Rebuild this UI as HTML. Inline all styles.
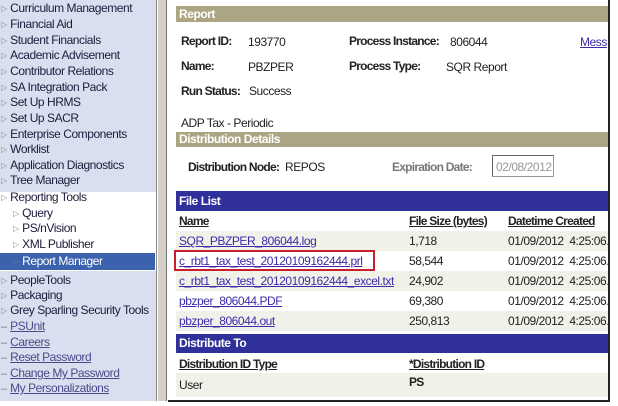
<!DOCTYPE html>
<html><head><style>
*{margin:0;padding:0;box-sizing:border-box}
body{width:618px;height:406px;overflow:hidden;background:#fff;font-family:"Liberation Sans",Arial,sans-serif;font-size:12px;position:relative}
#nav{position:absolute;left:0;top:0;width:157px;height:401px;background:#d9dfee;border-right:1px solid #8a8a8a}
.it{position:absolute;left:1px;height:15px;line-height:15px;color:#1c1c3c;white-space:nowrap;font-size:12px;letter-spacing:-0.45px}
.it:before{content:"▷";font-size:8px;color:#888;margin-right:3px;vertical-align:1px;letter-spacing:0}
.sub{left:13px}
.dash:before{content:"–";font-size:11px;color:#777;margin-right:3px;vertical-align:0}
.lnk{color:#4a4a8a;text-decoration:underline}
#white{position:absolute;left:0;top:192px;width:156px;height:79px;background:#fff}
#sel{position:absolute;left:0;top:253px;width:155px;height:17px;background:#3d62ad}
#strip{position:absolute;left:158px;top:0;width:9px;height:401px;background:#d4d0c8;border-right:1px solid #777}
#main{position:absolute;left:168px;top:0;width:442px;height:402px;background:#fff;border-right:2px solid #222;border-bottom:2px solid #222;letter-spacing:-0.45px}
.bar{position:absolute;left:8px;width:432px;color:#fff;font-weight:bold;font-size:12px;padding-left:3px}
.tan{background:#aca583}
.blue{background:#30309a}
.t{position:absolute;white-space:nowrap;color:#222}
.b{font-weight:bold;letter-spacing:-0.75px}
.a{color:#3a2ca8;text-decoration:underline}
.h{text-decoration:underline;font-weight:bold;color:#222;letter-spacing:-0.75px}
.row{position:absolute;left:8px;width:432px;height:20px;background:#f1f1ea}
</style></head><body>
<div id="nav">
<div id="white"></div><div id="sel"></div>
<div class="it" style="top:1px">Curriculum Management</div>
<div class="it" style="top:17px">Financial Aid</div>
<div class="it" style="top:33px">Student Financials</div>
<div class="it" style="top:48px">Academic Advisement</div>
<div class="it" style="top:64px">Contributor Relations</div>
<div class="it" style="top:80px">SA Integration Pack</div>
<div class="it" style="top:95px">Set Up HRMS</div>
<div class="it" style="top:111px">Set Up SACR</div>
<div class="it" style="top:127px">Enterprise Components</div>
<div class="it" style="top:142px">Worklist</div>
<div class="it" style="top:158px">Application Diagnostics</div>
<div class="it" style="top:173px">Tree Manager</div>
<div class="it" style="top:190px;">Reporting Tools</div>
<div class="it sub" style="top:206px">Query</div>
<div class="it sub" style="top:221px">PS/nVision</div>
<div class="it sub" style="top:237px">XML Publisher</div>
<div class="it sub dash" style="top:254px;color:#fff">Report Manager</div>
<div class="it" style="top:273px">PeopleTools</div>
<div class="it" style="top:288px">Packaging</div>
<div class="it" style="top:303px">Grey Sparling Security Tools</div>
<div class="it dash" style="top:319px"><span class="lnk">PSUnit</span></div>
<div class="it dash" style="top:335px"><span class="lnk">Careers</span></div>
<div class="it dash" style="top:350px"><span class="lnk">Reset Password</span></div>
<div class="it dash" style="top:366px"><span class="lnk">Change My Password</span></div>
<div class="it dash" style="top:381px"><span class="lnk">My Personalizations</span></div>
</div>
<div id="strip"></div>
<div id="main">
<div class="bar tan" style="top:6px;height:16px;line-height:16px">Report</div>
<div class="t b" style="left:13px;top:34px">Report ID:</div><div class="t" style="left:80px;top:35px">193770</div>
<div class="t b" style="left:181px;top:34px">Process Instance:</div><div class="t" style="left:282px;top:35px">806044</div>
<div class="t a" style="left:412px;top:35px">Mess</div>
<div class="t b" style="left:13px;top:59px">Name:</div><div class="t" style="left:80px;top:60px">PBZPER</div>
<div class="t b" style="left:181px;top:59px">Process Type:</div><div class="t" style="left:278px;top:60px">SQR Report</div>
<div class="t b" style="left:13px;top:84px">Run Status:</div><div class="t" style="left:81px;top:84px">Success</div>
<div class="t" style="left:13px;top:116px">ADP Tax - Periodic</div>
<div class="bar tan" style="top:132px;height:15px;line-height:15px">Distribution Details</div>
<div class="t b" style="left:20px;top:160px">Distribution Node:</div><div class="t" style="left:117px;top:160px">REPOS</div>
<div class="t b" style="left:224px;top:160px;color:#777">Expiration Date:</div>
<div style="position:absolute;left:324px;top:155px;width:62px;height:22px;border:1px solid #999;border-top-color:#666;border-left-color:#666"></div>
<div class="t" style="left:328px;top:160px;color:#999">02/08/2012</div>
<div class="bar blue" style="top:191px;height:20px;line-height:20px">File List</div>
<div class="t h" style="left:11px;top:214px">Name</div>
<div class="t h" style="left:241px;top:214px">File Size (bytes)</div>
<div class="t h" style="left:340px;top:214px">Datetime Created</div>
<div class="row" style="top:231px"></div>
<div class="row" style="top:271px"></div>
<div class="row" style="top:311px"></div>
<div class="t a" style="left:11px;top:234px">SQR_PBZPER_806044.log</div><div class="t" style="left:241px;top:234px">1,718</div><div class="t" style="left:340px;top:234px">01/09/2012&nbsp; 4:25:06.</div>
<div class="t a" style="left:11px;top:254px">c_rbt1_tax_test_20120109162444.prl</div><div class="t" style="left:241px;top:254px">58,544</div><div class="t" style="left:340px;top:254px">01/09/2012&nbsp; 4:25:06.</div>
<div class="t a" style="left:11px;top:274px">c_rbt1_tax_test_20120109162444_excel.txt</div><div class="t" style="left:241px;top:274px">24,902</div><div class="t" style="left:340px;top:274px">01/09/2012&nbsp; 4:25:06.</div>
<div class="t a" style="left:11px;top:294px">pbzper_806044.PDF</div><div class="t" style="left:241px;top:294px">69,380</div><div class="t" style="left:340px;top:294px">01/09/2012&nbsp; 4:25:06.</div>
<div class="t a" style="left:11px;top:314px">pbzper_806044.out</div><div class="t" style="left:241px;top:314px">250,813</div><div class="t" style="left:340px;top:314px">01/09/2012&nbsp; 4:25:06.</div>
<div style="position:absolute;left:6px;top:250px;width:201px;height:21px;border:2px solid #c8202a"></div>
<div class="bar blue" style="top:334px;height:19px;line-height:19px">Distribute To</div>
<div class="t h" style="left:11px;top:357px">Distribution ID Type</div>
<div class="t h" style="left:241px;top:357px">*Distribution ID</div>
<div class="row" style="top:373px;height:24px"></div>
<div class="t" style="left:11px;top:378px">User</div>
<div class="t b" style="left:241px;top:375px">PS</div>
</div>
</body></html>
